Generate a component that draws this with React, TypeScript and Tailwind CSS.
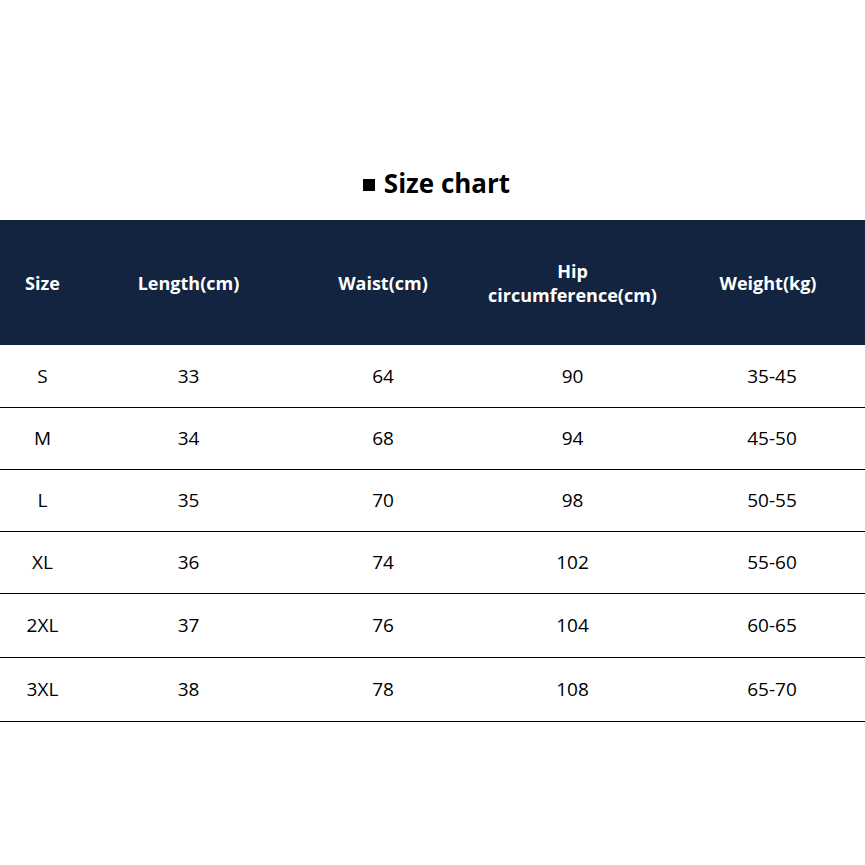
const headers = ['Size', 'Length(cm)', 'Waist(cm)', 'Hip\ncircumference(cm)', 'Weight(kg)']

const rows = [
  ['S', '33', '64', '90', '35-45'],
  ['M', '34', '68', '94', '45-50'],
  ['L', '35', '70', '98', '50-55'],
  ['XL', '36', '74', '102', '55-60'],
  ['2XL', '37', '76', '104', '60-65'],
  ['3XL', '38', '78', '108', '65-70'],
]

const heights = ['h-[63px]', 'h-[62px]', 'h-[62px]', 'h-[62px]', 'h-[64px]', 'h-[64px]']

const cols = 'grid grid-cols-[85px_207px_182px_197px_194px]'

export default function App() {
  return (
    <div className="w-[865px] h-[865px] bg-white text-black font-['Open_Sans','Noto_Sans',sans-serif]">
      <div className="pt-[145px] h-[220px] flex justify-center">
        <h1 className="text-[26px] leading-[40px] font-bold flex items-center gap-[9px] pl-2">
          <span className="inline-block w-[12px] h-[12px] bg-black mt-[5px]" />
          Size chart
        </h1>
      </div>

      <div className={`${cols} h-[125px] bg-[#12243f] text-white text-[18px] font-bold leading-[24px]`}>
        {headers.map((h) => (
          <div key={h} className="flex items-center justify-center text-center whitespace-pre-line">
            {h}
          </div>
        ))}
      </div>

      {rows.map((r, i) => (
        <div key={r[0]} className={`${cols} ${heights[i]} border-b border-black text-[19px]`}>
          {r.map((c, j) => (
            <div key={j} className={`flex items-center justify-center ${j === 4 ? 'pl-2' : ''}`}>
              {c}
            </div>
          ))}
        </div>
      ))}
    </div>
  )
}
